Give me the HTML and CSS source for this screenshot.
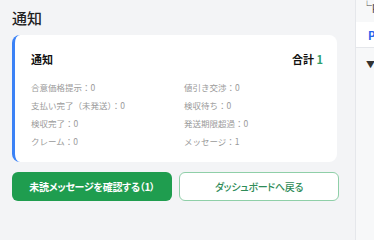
FILE: index.html
```html
<!DOCTYPE html>
<html lang="ja">
<head>
<meta charset="utf-8">
<link rel="stylesheet" href="styles.css">
</head>
<body>
<div class="layout">
  <main class="main">
    <h1 class="title">通知</h1>
    <section class="card">
      <div class="card-head">
        <span class="card-title">通知</span>
        <span class="total">合計 <span class="total-num">1</span></span>
      </div>
      <div class="stats">
        <div class="stat">合意価格提示：0</div>
        <div class="stat">値引き交渉：0</div>
        <div class="stat">支払い完了（未発送）：0</div>
        <div class="stat">検収待ち：0</div>
        <div class="stat">検収完了：0</div>
        <div class="stat">発送期限超過：0</div>
        <div class="stat">クレーム：0</div>
        <div class="stat">メッセージ：1</div>
      </div>
    </section>
    <div class="actions">
      <button class="btn btn-primary">未読メッセージを確認する（1）</button>
      <button class="btn btn-outline">ダッシュボードへ戻る</button>
    </div>
  </main>
  <aside class="side">
    <div class="side-top">└p</div>
    <div class="side-box">P</div>
    <div class="side-caret">▼</div>
  </aside>
</div>
</body>
</html>
```
FILE: styles.css
```css
* { box-sizing: border-box; }
html, body { margin: 0; padding: 0; }
body {
  background: #f3f4f6;
  font-family: "Noto Sans CJK JP", "Noto Sans", sans-serif;
  color: #1f2328;
  width: 374px;
  height: 240px;
  overflow: hidden;
}
.layout { display: flex; height: 240px; }
.main {
  width: 355px;
  flex-shrink: 0;
  padding: 9px 16px 0 12px;
}
.title {
  margin: 0 0 9px;
  font-size: 15px;
  font-weight: 500;
  line-height: 17px;
  color: #222;
}
.card {
  width: 325px;
  background: #fff;
  border-left: 3px solid #3b82f6;
  border-radius: 8px;
  padding: 16px 14px 12px 16px;
  height: 127px;
}
.card-head {
  display: flex;
  justify-content: space-between;
  align-items: center;
  font-size: 11px;
  font-weight: 700;
  line-height: 16px;
  color: #111;
}
.total-num { color: #2f9e6a; }
.stats {
  display: grid;
  grid-template-columns: 153px 1fr;
  margin-top: 11px;
}
.stat {
  font-size: 8.5px;
  line-height: 18px;
  color: #9a9a9a;
}
.actions {
  display: flex;
  gap: 7px;
  margin-top: 10px;
}
.btn {
  flex-shrink: 0;
  width: 160px;
  height: 29px;
  border-radius: 6px;
  font-family: "Noto Sans CJK JP", "Noto Sans", sans-serif;
  font-feature-settings: "palt";
  font-size: 10px;
  letter-spacing: -0.3px;
  padding: 0;
}
.btn-primary {
  background: #1f9d4f;
  color: #fff;
  border: none;
  font-weight: 700;
}
.btn-outline {
  background: #fff;
  color: #2e8b57;
  border: 1px solid #8fcfa8;
  font-weight: 500;
}
.side {
  flex: 1;
  min-width: 0;
  overflow: hidden;
  border-left: 1px solid #e5e7eb;
  background: #f7f8f9;
}
.side-top {
  font-size: 10px;
  line-height: 12px;
  color: #444;
  padding: 0 0 0 6px;
  height: 22px;
  white-space: nowrap;
}
.side-box {
  background: #fff;
  height: 26px;
  border-bottom: 1px solid #e5e7eb;
  color: #2563eb;
  font-weight: 700;
  font-size: 11px;
  line-height: 26px;
  padding-left: 12px;
}
.side-caret {
  font-size: 9px;
  color: #333;
  padding: 12px 0 0 10px;
  line-height: 10px;
}
```
